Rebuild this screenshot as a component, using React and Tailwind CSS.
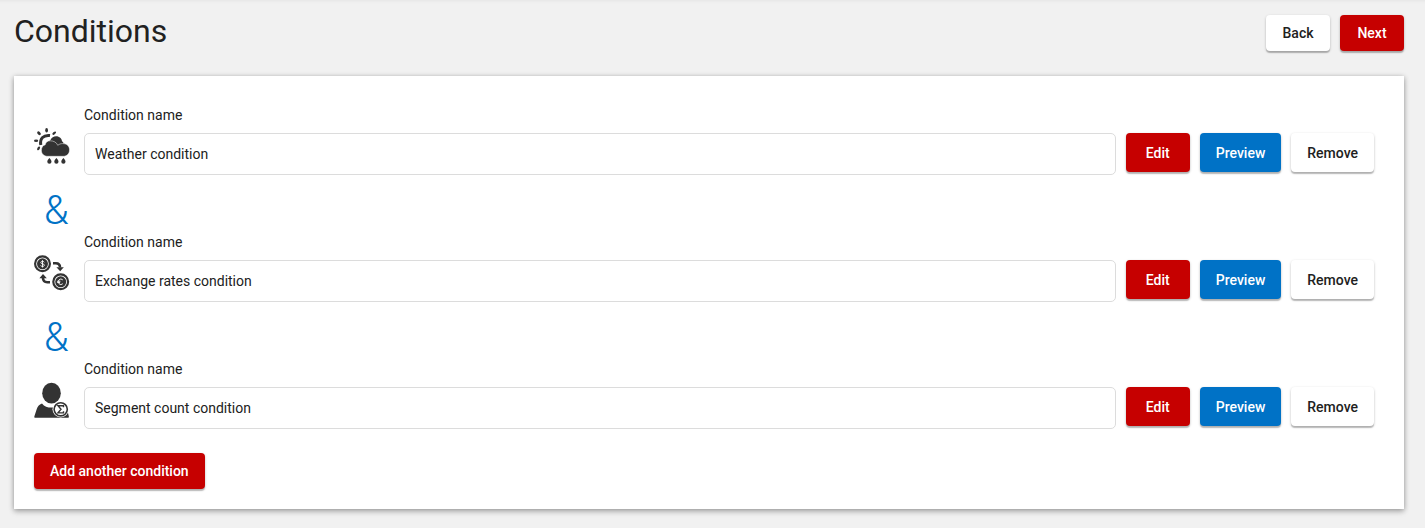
import React, { useState } from 'react';
import clsx from 'clsx';

const WeatherIcon = () => (
    <svg viewBox="0 0 36 36" className="w-9 h-9 text-[#333]" fill="currentColor" aria-hidden="true">
        {/* Sun */}
        <path d="M6.8 17C5.6 10.5 9.5 6.8 16 7.6" fill="none" stroke="currentColor" strokeWidth="3" />
        <ellipse cx="12.6" cy="2.2" rx="1.4" ry="2.2" />
        <ellipse cx="5" cy="5.2" rx="1.4" ry="2.2" transform="rotate(-45 5 5.2)" />
        <ellipse cx="20.2" cy="5.2" rx="1.2" ry="2.2" transform="rotate(50 20.2 5.2)" />
        <ellipse cx="2.1" cy="12.7" rx="2.1" ry="1.2" />
        <ellipse cx="4.6" cy="20.4" rx="1.2" ry="2.1" transform="rotate(30 4.6 20.4)" />
        {/* Clouds */}
        <path d="M14.6 13.4c.9-.3 1.5-1 2-1.7 1-2 3-3.4 5.5-3.4 3.5 0 5.6 2.4 5.9 5 1 .5 1.5 1.3 1.6 2.4l-6 2z" />
        <path
            d="M13.5 28.3C9.8 28.3 7.4 25.8 7.4 22.3c0-2.9 1.5-4.9 3.8-5.5.5-2.7 2.5-4 5-4 3.4 0 6.3 1.5 7.6 4.5 1.3-1.2 2.9-1.7 5-1.7 4.100 0 6.700 2.600 6.700 6.200 0 4-2.500 6.500-6.300 6.500z"
            stroke="#fff"
            strokeWidth="0.5"
        />
        {/* Rain */}
        <path d="M15.4 30c1.3 1.5 2.1 2.5 2.1 3.7a2.1 2.1 0 0 1-4.2 0c0-1.2.8-2.2 2.1-3.7zM22.4 30c1.3 1.5 2.1 2.5 2.1 3.7a2.1 2.1 0 0 1-4.2 0c0-1.2.8-2.2 2.1-3.7zM29.4 30c1.3 1.5 2.1 2.5 2.1 3.7a2.1 2.1 0 0 1-4.2 0c0-1.2.8-2.2 2.1-3.7z" />
    </svg>
);

const ExchangeIcon = () => (
    <svg viewBox="0 0 36 36" className="w-9 h-9 text-[#333]" fill="none" stroke="currentColor" aria-hidden="true">
        <circle cx="8.5" cy="8.8" r="7.4" strokeWidth="2.2" />
        <circle cx="8.5" cy="8.8" r="5.5" fill="currentColor" stroke="none" />
        <path d="M10.2 7.3c-.3-.7-.9-1-1.7-1-1 0-1.7.5-1.7 1.2 0 1.8 3.5.8 3.5 2.7 0 .8-.7 1.3-1.8 1.3-.9 0-1.5-.3-1.8-1.1M8.5 5.2v7.3" stroke="#fff" strokeWidth="0.9" />
        <circle cx="26.7" cy="26.8" r="7.4" strokeWidth="2.2" />
        <circle cx="26.7" cy="26.8" r="5.5" fill="currentColor" stroke="none" />
        <path d="M28.8 24.9a2.7 2.7 0 1 0 0 3.8M23.2 26.3h3.2M23.2 27.5h2.9" stroke="#fff" strokeWidth="0.9" />
        {/* Arrows */}
        <path d="M19 8.3h2.8c2.8 0 4.2 1.4 4.2 4.2" strokeWidth="2.6" />
        <path d="M22.4 12.2h7.4L26.2 16.2z" fill="currentColor" stroke="none" />
        <path d="M16 27.2h-2.8C10.4 27.2 9 25.8 9 23" strokeWidth="2.6" />
        <path d="M5.4 23.2h7.4L9 19z" fill="currentColor" stroke="none" />
    </svg>
);

const SegmentIcon = () => (
    <svg viewBox="0 0 36 36" className="w-9 h-9 text-[#333]" fill="currentColor" aria-hidden="true">
        <ellipse cx="17.5" cy="11.2" rx="9.3" ry="10.4" />
        <path d="M8 21.4c2.3 2.9 5.5 4.2 9.5 4.2s7-1.3 9.3-4.2c4 1.2 5.6 2.6 6.4 6l1.6 6.8c.3 1-.2 1.6-1.2 1.6H1.6C.5 35.8.1 35.2.4 34.2l2.2-6.8c.9-3.1 2.4-5 5.4-6z" />
        <circle cx="26.7" cy="27.3" r="8.2" fill="#fff" />
        <circle cx="26.7" cy="27.3" r="6.6" fill="none" stroke="currentColor" strokeWidth="1.6" />
        <path d="M29.5 25.3v-1.6H24l3 3.6-3 3.6h5.5v-1.6" fill="none" stroke="currentColor" strokeWidth="1.4" />
    </svg>
);

const variants = {
    primary: 'bg-[#c60000] text-white hover:bg-[#a80000]',
    secondary: 'bg-[#0072c6] text-white hover:bg-[#005fa6]',
    plain: 'bg-white text-[#212121] hover:bg-gray-50',
};

const Button = ({ variant = 'primary', className, children }) => (
    <button
        type="button"
        className={clsx(
            'min-w-16 rounded px-4 text-sm font-medium whitespace-nowrap shadow-[0_1px_3px_rgba(0,0,0,0.2),0_2px_1px_rgba(0,0,0,0.2)] transition-colors',
            variants[variant],
            className
        )}
    >
        {children}
    </button>
);

const initialConditions = [
    { id: 'weather', name: 'Weather condition', icon: WeatherIcon },
    { id: 'exchange', name: 'Exchange rates condition', icon: ExchangeIcon },
    { id: 'segment', name: 'Segment count condition', icon: SegmentIcon },
];

const ConditionRow = ({ condition, onChange }) => {
    const Icon = condition.icon;

    return (
        <div className="flex">
            <div className="w-[50px] shrink-0 pt-[23px]">
                <Icon />
            </div>
            <div className="flex-1 min-w-0">
                <label htmlFor={condition.id} className="block mb-2 text-sm">
                    Condition name
                </label>
                <input
                    id={condition.id}
                    type="text"
                    value={condition.name}
                    onChange={(e) => onChange(condition.id, e.target.value)}
                    className="block w-full h-[42px] px-[10px] text-sm bg-white border border-[#dcdcdc] rounded-[5px] outline-none focus:border-[#0072c6]"
                />
            </div>
            <div className="flex gap-[10px] ml-[10px] pt-7">
                <Button className="h-[39px]">Edit</Button>
                <Button variant="secondary" className="h-[39px]">Preview</Button>
                <Button variant="plain" className="h-[39px]">Remove</Button>
            </div>
        </div>
    );
};

const App = () => {
    const [conditions, setConditions] = useState(initialConditions);

    const handleChange = (id, name) => {
        setConditions(conditions.map((c) => (c.id === id ? { ...c, name } : c)));
    };

    return (
        <div className="min-h-screen pl-[14px] pr-[21px] pb-5 bg-[#f1f1f1] text-[#212121] font-[Roboto,sans-serif] shadow-[inset_0_4px_4px_-4px_rgba(0,0,0,0.08)]">
            {/* Header */}
            <header className="flex items-start justify-between h-19 pt-[15px]">
                <h1 className="text-[32px] leading-8">Conditions</h1>
                <div className="flex gap-[10px]">
                    <Button variant="plain" className="h-9">Back</Button>
                    <Button className="h-9">Next</Button>
                </div>
            </header>

            {/* Conditions */}
            <main className="pt-[29px] pb-5 pl-5 pr-[30px] bg-white shadow-[0_1px_5px_rgba(0,0,0,0.3),0_3px_6px_rgba(0,0,0,0.15)]">
                {conditions.map((condition, index) => (
                    <React.Fragment key={condition.id}>
                        {index > 0 && (
                            <div className="flex items-center h-[57px] pl-[10px] pt-[14px] text-[40px] leading-10 font-[350] text-[#0072c6]">
                                &amp;
                            </div>
                        )}
                        <ConditionRow condition={condition} onChange={handleChange} />
                    </React.Fragment>
                ))}
                <Button className="h-9 mt-6">Add another condition</Button>
            </main>
        </div>
    );
};

export default App;
